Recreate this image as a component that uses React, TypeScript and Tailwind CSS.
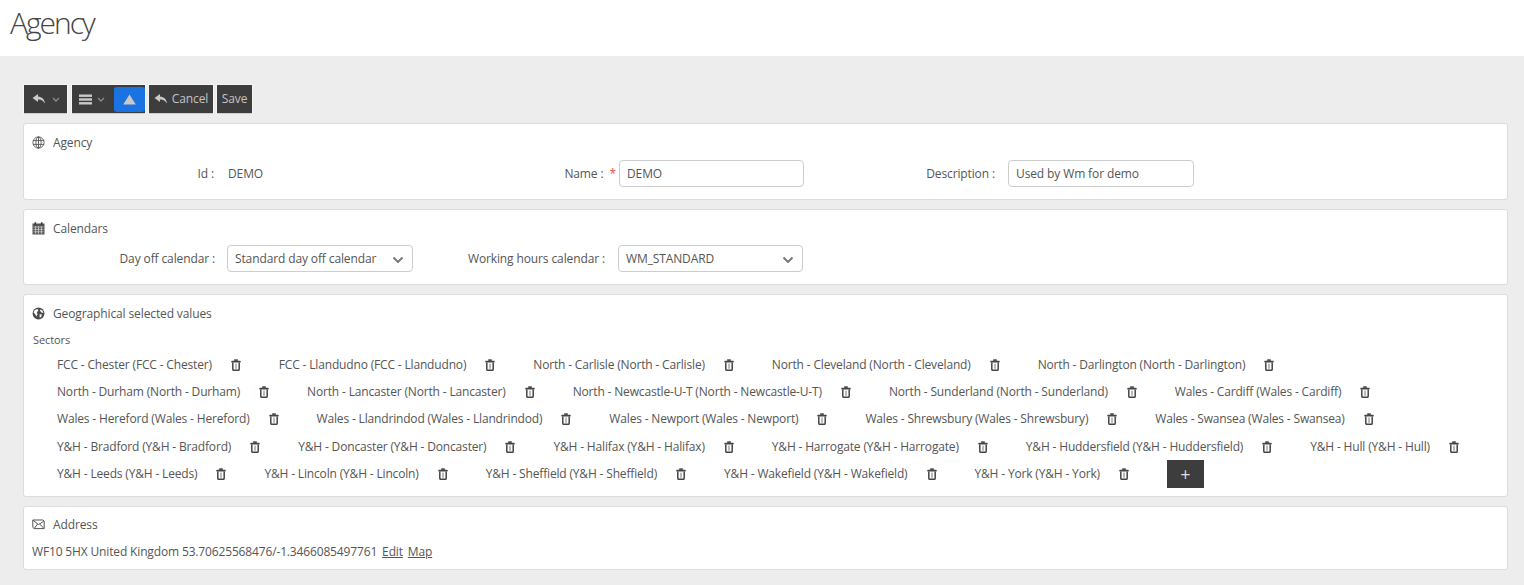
import React from "react";

const font = { fontFamily: '"Open Sans", sans-serif' };

const sectors = [
  "FCC - Chester (FCC - Chester)", "FCC - Llandudno (FCC - Llandudno)", "North - Carlisle (North - Carlisle)", "North - Cleveland (North - Cleveland)", "North - Darlington (North - Darlington)",
  "North - Durham (North - Durham)", "North - Lancaster (North - Lancaster)", "North - Newcastle-U-T (North - Newcastle-U-T)", "North - Sunderland (North - Sunderland)", "Wales - Cardiff (Wales - Cardiff)",
  "Wales - Hereford (Wales - Hereford)", "Wales - Llandrindod (Wales - Llandrindod)", "Wales - Newport (Wales - Newport)", "Wales - Shrewsbury (Wales - Shrewsbury)", "Wales - Swansea (Wales - Swansea)",
  "Y&H - Bradford (Y&H - Bradford)", "Y&H - Doncaster (Y&H - Doncaster)", "Y&H - Halifax (Y&H - Halifax)", "Y&H - Harrogate (Y&H - Harrogate)", "Y&H - Huddersfield (Y&H - Huddersfield)", "Y&H - Hull (Y&H - Hull)",
  "Y&H - Leeds (Y&H - Leeds)", "Y&H - Lincoln (Y&H - Lincoln)", "Y&H - Sheffield (Y&H - Sheffield)", "Y&H - Wakefield (Y&H - Wakefield)", "Y&H - York (Y&H - York)",
];

function ReplyIcon() {
  return (
    <svg width="14" height="12" viewBox="0 0 14 12" fill="#c9c9c9">
      <path d="M6 1 L0.5 5 L6 9 V6.6 C9 6.4 11 7.6 13 10.5 C12.6 6.4 10 3.8 6 3.5 Z" />
    </svg>
  );
}
function Chevron({ className = "", stroke = "#8a8a8a", w = 8, sw = 1.4 }: { className?: string; stroke?: string; w?: number; sw?: number }) {
  return (
    <svg className={className} width={w} height={w * 0.625} viewBox="0 0 8 5" fill="none">
      <path d="M1 1 L4 4 L7 1" stroke={stroke} strokeWidth={sw} />
    </svg>
  );
}
function Trash() {
  return (
    <svg width="10" height="12" viewBox="0 0 10 12" fill="none" className="shrink-0">
      <rect x="3.2" y="0.3" width="3.6" height="1.6" fill="#444" />
      <rect x="0.4" y="1.8" width="9.2" height="1.8" rx="0.4" fill="#444" />
      <path d="M1.8 3.4 V10.2 C1.8 11 2.2 11.3 2.8 11.3 H7.2 C7.8 11.3 8.2 11 8.2 10.2 V3.4" stroke="#444" strokeWidth="1.5" />
      <path d="M5 4.6 V9.8" stroke="#777" strokeWidth="1" />
    </svg>
  );
}
function GlobeLines() {
  return (
    <svg width="13" height="13" viewBox="0 0 13 13" fill="none" stroke="#555" strokeWidth="0.9">
      <circle cx="6.5" cy="6.5" r="5.6" />
      <ellipse cx="6.5" cy="6.5" rx="2.6" ry="5.6" />
      <path d="M1 4.6 H12 M1 8.4 H12 M6.5 1 V12" />
    </svg>
  );
}
function CalendarIcon() {
  return (
    <svg width="13" height="13" viewBox="0 0 13 13">
      <rect x="0.5" y="1.5" width="12" height="11" fill="#555" />
      <rect x="2.5" y="0.3" width="1.6" height="2.4" fill="#333" />
      <rect x="8.9" y="0.3" width="1.6" height="2.4" fill="#333" />
      <path d="M1.5 5 H11.5 M1.5 7.4 H11.5 M1.5 9.8 H11.5 M3.6 4.4 V11.8 M6.5 4.4 V11.8 M9.4 4.4 V11.8" stroke="#ddd" strokeWidth="0.7" />
    </svg>
  );
}
function EarthIcon() {
  return (
    <svg width="13" height="13" viewBox="0 0 13 13">
      <circle cx="6.5" cy="6.5" r="5.9" fill="#4a4a4a" />
      <path d="M2.8 3 L5.5 2 L6.4 3.6 L4.8 5.2 L5.6 7.2 L4.3 9.4 L3 7 L1.6 5.6 Z M8 2.4 L10.4 3.4 L11.4 6 L9.4 5.6 L8.2 4 Z M7.6 7.2 L10 7.6 L9 10.2 L7.6 10.6 Z" fill="#fff" />
    </svg>
  );
}
function MailIcon() {
  return (
    <svg width="13" height="11" viewBox="0 0 13 11" fill="none" stroke="#555" strokeWidth="1">
      <path d="M0.8 1 H10.8 L12.2 2.2 V9.6 H2.2 L0.8 8.4 Z" />
      <path d="M1.2 1.4 L6.4 5.6 L11.6 2.4 M2.4 9.2 L5.4 5.2 M11.8 9.2 L7.6 5" />
    </svg>
  );
}

function ToolBtn({ children, className = "" }: { children: React.ReactNode; className?: string }) {
  return (
    <div className={`flex h-[28px] items-center bg-[#3d3d3d] shadow-[0_1px_0_#cfcfcf,0_0_0_1px_#f6f6f6] text-[12px] tracking-[-0.1px] text-[#c4c4c4] ${className}`}>
      {children}
    </div>
  );
}

function Card({ icon, title, className = "", children }: { icon: React.ReactNode; title: string; className?: string; children: React.ReactNode }) {
  return (
    <section className={`rounded-[3px] border border-[#dcdcdc] bg-white ${className}`}>
      <div className="flex h-[17px] items-center text-[12px] tracking-[-0.12px] text-[#555]">
        <span className="flex w-[29px] shrink-0 justify-center">{icon}</span>
        <span>{title}</span>
      </div>
      {children}
    </section>
  );
}

function Field({ label, width, children }: { label: React.ReactNode; width: string; children: React.ReactNode }) {
  return (
    <div className="flex items-center">
      <div className={`whitespace-nowrap text-right text-[12px] tracking-[-0.12px] text-[#555] ${width}`}>{label}</div>
      {children}
    </div>
  );
}

function TextBox({ value, className = "" }: { value: string; className?: string }) {
  return (
    <div className={`flex h-[27px] items-center rounded-[4px] border border-[#ccc] bg-white pl-[7px] pt-[1px] text-[12px] tracking-[-0.12px] text-[#555] ${className}`}>{value}</div>
  );
}
function SelectBox({ value, className = "" }: { value: string; className?: string }) {
  return (
    <div className={`flex h-[27px] items-center justify-between rounded-[4px] border border-[#ccc] bg-white pl-[7px] pr-[8px] text-[12px] tracking-[-0.12px] text-[#555] ${className}`}>
      <span className="whitespace-nowrap">{value}</span>
      <Chevron className="mt-[2px]" stroke="#777" w={12} sw={1.3} />
    </div>
  );
}

export default function App() {
  return (
    <div className="h-[585px] w-[1524px] overflow-hidden bg-[#ededed]" style={font}>
      <header className="h-[56px] bg-white pl-[10px] pt-[2px] text-[30px] font-light leading-[41px] text-[#444] tracking-[-2px]">Agency</header>
      <main className="flex flex-col pl-[23px] pr-[16px] pt-[29px]">
        <div className="mb-[10px] ml-[1px] flex items-center gap-[5px]">
          <ToolBtn className="w-[43px] justify-center gap-[6px]">
            <ReplyIcon />
            <Chevron />
          </ToolBtn>
          <ToolBtn className="w-[73px] pl-[7px]">
            <svg width="13" height="11" viewBox="0 0 13 11" fill="#c9c9c9"><rect y="0.5" width="13" height="2.4" /><rect y="4.3" width="13" height="2.4" /><rect y="8.1" width="13" height="2.4" /></svg>
            <Chevron className="ml-[5px]" />
            <span className="ml-[9px] flex h-[25px] w-[31px] items-center justify-center rounded-[3px] bg-[#1a73e0]">
              <svg width="13" height="11" viewBox="0 0 13 11" fill="#c8c8c8"><path d="M6.5 0.5 L12.8 10.5 H0.2 Z" /></svg>
            </span>
          </ToolBtn>
          <div className="-ml-[1px] flex gap-[4px]">
            <ToolBtn className="w-[64px] justify-center gap-[4px]">
              <ReplyIcon />
              <span>Cancel</span>
            </ToolBtn>
            <ToolBtn className="w-[35px] justify-center">Save</ToolBtn>
          </div>
        </div>

        <Card icon={<GlobeLines />} title="Agency" className="mb-[9px] h-[77px] pt-[10px]">
          <div className="mt-[9px] flex h-[27px] items-center">
            <Field label="Id :" width="w-[190px]">
              <span className="ml-[14px] w-[323px] text-[12px] tracking-[-0.12px] text-[#555]">DEMO</span>
            </Field>
            <Field label={<>Name : <span className="ml-[3px] text-[#e74c3c]">*</span></>} width="w-[65px]">
              <TextBox value="DEMO" className="ml-[3px] w-[185px]" />
            </Field>
            <Field label="Description :" width="w-[191px]">
              <TextBox value="Used by Wm for demo" className="ml-[13px] w-[186px]" />
            </Field>
          </div>
        </Card>

        <Card icon={<CalendarIcon />} title="Calendars" className="mb-[9px] h-[76px] pt-[10px]">
          <div className="mt-[8px] flex h-[27px] items-center">
            <Field label="Day off calendar :" width="w-[191px]">
              <SelectBox value="Standard day off calendar" className="ml-[12px] w-[186px]" />
            </Field>
            <Field label="Working hours calendar :" width="w-[192px]">
              <SelectBox value="WM_STANDARD" className="ml-[13px] w-[185px]" />
            </Field>
          </div>
        </Card>

        <Card icon={<EarthIcon />} title="Geographical selected values" className="mb-[9px] h-[203px] pt-[10px]">
          <div className="ml-[9px] mt-[11px] text-[11px] leading-[14px] tracking-[-0.1px] text-[#555]">Sectors</div>
          <div className="ml-[33px] mt-[4px] flex flex-wrap items-center">
            {sectors.map((s) => (
              <div key={s} className="mr-[38px] flex h-[27.3px] items-center text-[12px] tracking-[-0.165px] text-[#555]">
                <span className="mr-[19px] whitespace-nowrap">{s}</span>
                <Trash />
              </div>
            ))}
            <div className="flex h-[28px] w-[37px] items-center justify-center bg-[#3d3d3d] text-[18px] leading-none text-[#ddd]">+</div>
          </div>
        </Card>

        <Card icon={<MailIcon />} title="Address" className="h-[64px] pt-[9px]">
          <div className="ml-[8px] mt-[11px] text-[12px] leading-[16px] tracking-[-0.15px] text-[#555]">
            WF10 5HX United Kingdom 53.70625568476/-1.3466085497761
            <a className="ml-[5px] underline">Edit</a>
            <a className="ml-[5px] underline">Map</a>
          </div>
        </Card>
      </main>
    </div>
  );
}
